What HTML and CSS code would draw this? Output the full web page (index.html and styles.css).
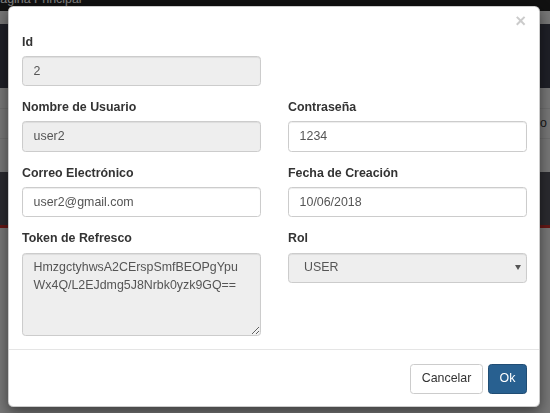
FILE: index.html
```html
<!DOCTYPE html>
<html lang="es">
<head>
<meta charset="utf-8">
<title>Editar Usuario</title>
<link rel="stylesheet" href="styles.css">
</head>
<body>
<div class="page">
  <div class="navbar"><span class="brand">Página Principal</span></div>
  <div class="band band-top"></div>
  <div class="trow"><span class="cell-right">Correo</span></div>
  <div class="band band-mid"></div>
  <div class="trow-bottom">
    <span>cz3aJ0yqpUdzgBZqUj2tGhzLrUyqPaVgW0dRZs4yqz9</span>
    <span>10/06/2018 12:00</span>
  </div>
</div>

<div class="overlay">
  <div class="modal">
    <div class="modal-header">
      <button class="close" type="button">&times;</button>
    </div>
    <div class="modal-body">
      <div class="row">
        <div class="col form-group">
          <label class="label">Id</label>
          <input class="form-control" type="text" value="2" readonly>
        </div>
        <div class="col"></div>
      </div>
      <div class="row">
        <div class="col form-group">
          <label class="label">Nombre de Usuario</label>
          <input class="form-control" type="text" value="user2" readonly>
        </div>
        <div class="col form-group">
          <label class="label">Contraseña</label>
          <input class="form-control" type="text" value="1234">
        </div>
      </div>
      <div class="row">
        <div class="col form-group">
          <label class="label">Correo Electrónico</label>
          <input class="form-control" type="text" value="user2@gmail.com">
        </div>
        <div class="col form-group">
          <label class="label">Fecha de Creación</label>
          <input class="form-control" type="text" value="10/06/2018">
        </div>
      </div>
      <div class="row">
        <div class="col form-group">
          <label class="label">Token de Refresco</label>
          <textarea class="form-control textarea" rows="4" readonly>HmzgctyhwsA2CErspSmfBEOPgYpuWx4Q/L2EJdmg5J8Nrbk0yzk9GQ==</textarea>
        </div>
        <div class="col form-group">
          <label class="label">Rol</label>
          <div class="select-wrap">
            <select class="form-control select" disabled>
              <option>USER</option>
            </select>
          </div>
        </div>
      </div>
    </div>
    <div class="modal-footer">
      <button class="btn btn-default" type="button">Cancelar</button>
      <button class="btn btn-primary" type="button">Ok</button>
    </div>
  </div>
</div>
</body>
</html>
```

FILE: styles.css
```css
html, body {
  margin: 0;
  padding: 0;
  height: 413px;
  overflow: hidden;
}

body {
  font-family: "Liberation Sans", Arial, sans-serif;
  font-size: 12.4px;
  line-height: 17.7px;
  color: #333;
}

/* ---------- background page ---------- */
.page {
  height: 413px;
  background: #eeeeee;
  overflow: hidden;
}

.navbar {
  height: 20px;
  background: #222;
}

.brand {
  display: block;
  margin: -9px 0 0 -8px;
  color: #fff;
}

.band {
  background: #3d3f4e;
}

.band-top {
  margin-top: 13px;
  height: 64px;
}

.trow {
  margin-top: 20px;
  height: 29px;
  border-top: 1px solid #ddd;
  border-bottom: 1px solid #ddd;
  display: flex;
  justify-content: flex-end;
  align-items: center;
  padding-right: 3px;
}

.band-mid {
  margin-top: 33px;
  height: 53px;
  background: #55555e;
  border-bottom: 3px solid #c9302c;
}

.trow-bottom {
  margin-top: 162px;
  display: flex;
  justify-content: space-between;
  padding: 0 30px 0 26px;
  color: #333;
}

/* ---------- overlay + modal ---------- */
.overlay {
  position: fixed;
  inset: 0;
  background: rgba(0, 0, 0, 0.5);
  padding: 6px 0 0 8px;
}

.modal {
  width: 532px;
  box-sizing: border-box;
  background: #fff;
  border: 1px solid rgba(0, 0, 0, 0.2);
  border-radius: 5.3px;
  box-shadow: 0 4.4px 13.3px rgba(0, 0, 0, 0.5);
}

.modal-header {
  display: flex;
  justify-content: flex-end;
  padding: 4.8px 13px 0 0;
  height: 18.6px;
}

.close {
  font-family: "Liberation Sans", Arial, sans-serif;
  font-size: 18.6px;
  font-weight: 700;
  line-height: 1;
  color: #000;
  opacity: 0.2;
  text-shadow: 0 1px 0 #fff;
  background: transparent;
  border: 0;
  padding: 0;
  margin: 0;
  cursor: pointer;
}

.modal-body {
  padding: 3.3px 12px 0 13px;
}

.row {
  display: flex;
  gap: 27px;
}

.col {
  flex: 1 1 0;
  min-width: 0;
}

.form-group {
  margin-bottom: 13.3px;
}

.label {
  display: block;
  font-weight: 700;
  margin-bottom: 4.4px;
  line-height: 17.7px;
}

.form-control {
  display: block;
  width: 100%;
  box-sizing: border-box;
  height: 30.2px;
  margin: 0;
  padding: 5.3px 10.6px;
  font-family: "Liberation Sans", Arial, sans-serif;
  font-size: 12.4px;
  line-height: 17.7px;
  color: #555;
  background: #fff;
  border: 1px solid #ccc;
  border-radius: 3.5px;
  box-shadow: inset 0 1px 1px rgba(0, 0, 0, 0.075);
  outline: none;
}

.form-control[readonly],
.form-control[disabled] {
  background-color: #eee;
}

.textarea {
  height: 83.4px;
  resize: vertical;
  overflow: hidden;
}

.select-wrap {
  position: relative;
}

.select {
  appearance: none;
  -webkit-appearance: none;
  padding-left: 15px;
  color: #555;
  opacity: 1;
}

.select-wrap::after {
  content: "";
  position: absolute;
  right: 6px;
  top: 12.5px;
  border-left: 3px solid transparent;
  border-right: 3px solid transparent;
  border-top: 5px solid #555;
}

.modal-footer {
  display: flex;
  justify-content: flex-end;
  gap: 5px;
  padding: 13.3px 12px 12.6px 13px;
  border-top: 1px solid #e5e5e5;
}

.btn {
  height: 30.3px;
  box-sizing: border-box;
  padding: 5.3px 10.6px;
  font-family: "Liberation Sans", Arial, sans-serif;
  font-size: 12.4px;
  line-height: 17.7px;
  border: 1px solid transparent;
  border-radius: 3.5px;
  cursor: pointer;
}

.btn-default {
  background: #fff;
  border-color: #ccc;
  color: #333;
}

.btn-primary {
  background: #286090;
  border-color: #204d74;
  color: #fff;
}
```
